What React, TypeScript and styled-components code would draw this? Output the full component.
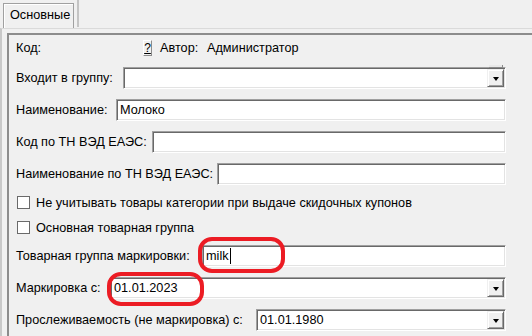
import React from 'react';
import styled, { createGlobalStyle } from 'styled-components';

const GlobalStyle = createGlobalStyle`
  html, body {
    margin: 0;
    padding: 0;
    background: #f0f0f0;
  }
  body {
    font-family: 'Liberation Sans', Arial, sans-serif;
    font-size: 12.7px;
    color: #000;
  }
`;

const Window = styled.div`
  position: relative;
  width: 532px;
  height: 336px;
  overflow: hidden;
  background: #f0f0f0;
  display: flex;
  flex-direction: column;
`;

const TabBar = styled.div`
  display: flex;
  align-items: flex-start;
  height: 28px;
  padding: 3px 0 0 3px;
  box-sizing: border-box;
`;

const Tab = styled.div`
  width: 71px;
  height: 25px;
  box-sizing: border-box;
  border: 1px solid #a0a0a0;
  border-bottom: none;
  box-shadow: inset 1px 1px #ffffff;
  padding: 4px 0 0 6px;
  white-space: nowrap;
`;

const TabEdge = styled.div`
  width: 2px;
  height: 27px;
  margin: -3px 0 0 3px;
  background: #c4c4c4;
`;

const Page = styled.div`
  flex: 1;
  display: flex;
  border-left: 2px solid #c8c8c8;
  border-top: 1px solid #dadada;
`;

const Frame = styled.div`
  flex: 1;
  margin: 4px 0 0 5px;
  border-top: 2px solid #8c8c8c;
  border-left: 2px solid #8c8c8c;
  padding: 4px 26px 0 7px;
`;

const Form = styled.div`
  display: flex;
  flex-direction: column;
`;

const Row = styled.div<{ h: number; mt: number }>`
  display: flex;
  align-items: center;
  height: ${(p) => p.h}px;
  margin-top: ${(p) => p.mt}px;
  white-space: nowrap;
`;

const Label = styled.div<{ w: number }>`
  width: ${(p) => p.w}px;
  flex: none;
`;

const HelpButton = styled.div`
  width: 9px;
  height: 16px;
  box-sizing: border-box;
  border-top: 1px solid #ffffff;
  border-left: 1px solid #ffffff;
  border-right: 1px solid #8c8c8c;
  border-bottom: 1px solid #8c8c8c;
  font-size: 12px;
  line-height: 14px;
  text-align: center;
  text-decoration: underline;
  margin-right: 8px;
`;

const Field = styled.div`
  position: relative;
  flex: 1;
  height: 22px;
  box-sizing: border-box;
  background: #ffffff;
  border-top: 1px solid #a0a0a0;
  border-left: 1px solid #a0a0a0;
  border-right: 1px solid #ffffff;
  border-bottom: 1px solid #ffffff;
  box-shadow: inset 1px 1px #696969, inset -1px -1px #e3e3e3;
  display: flex;
  align-items: center;
  padding-left: 3px;
`;

const Caret = styled.span`
  display: inline-block;
  width: 1px;
  height: 16px;
  background: #000;
  margin-left: 1px;
`;

const DropButton = styled.div<{ hat?: boolean }>`
  position: absolute;
  right: 1px;
  top: 1px;
  width: 17px;
  height: 18px;
  box-sizing: border-box;
  background: #f0f0f0;
  border-top: 1px solid #f0f0f0;
  border-left: 1px solid #f0f0f0;
  border-right: 1px solid #696969;
  border-bottom: 1px solid #696969;
  box-shadow: inset 1px 1px #ffffff, inset -1px -1px #a0a0a0;
  display: flex;
  align-items: center;
  justify-content: center;

  &::after {
    content: '';
    border-left: 3.5px solid transparent;
    border-right: 3.5px solid transparent;
    border-top: 4px solid #000;
    margin-top: 1px;
  }

  ${(p) =>
    p.hat &&
    `
    &::before {
      content: '';
      position: absolute;
      left: 1px;
      top: -5px;
      width: 13px;
      height: 2px;
      background: #e8e8e8;
      border-bottom: 1px solid #8a8a8a;
      border-right: 1px solid #8a8a8a;
    }
  `}
`;

const Check = styled.div`
  width: 13px;
  height: 13px;
  box-sizing: border-box;
  border: 1px solid #6a6a6a;
  background: #ffffff;
  margin: 0 6px 0 1px;
`;

const Mark = styled.div<{ x: number; y: number; w: number; h: number }>`
  position: absolute;
  left: ${(p) => p.x}px;
  top: ${(p) => p.y}px;
  width: ${(p) => p.w}px;
  height: ${(p) => p.h}px;
  box-sizing: border-box;
  border: 4px solid #ec1c24;
  border-radius: 14px;
  pointer-events: none;
`;

const App = () => {
  return (
    <Window>
      <GlobalStyle />
      <TabBar>
        <Tab>Основные</Tab>
        <TabEdge />
      </TabBar>
      <Page>
        <Frame>
          <Form>
            <Row h={18} mt={0}>
              <Label w={127}>Код:</Label>
              <HelpButton>?</HelpButton>
              <Label w={47}>Автор:</Label>
              <span>Администратор</span>
            </Row>
            <Row h={22} mt={10}>
              <Label w={107}>Входит в группу:</Label>
              <Field>
                <DropButton hat />
              </Field>
            </Row>
            <Row h={22} mt={10}>
              <Label w={100}>Наименование:</Label>
              <Field>Молоко</Field>
            </Row>
            <Row h={22} mt={10}>
              <Label w={136}>Код по ТН ВЭД ЕАЭС:</Label>
              <Field />
            </Row>
            <Row h={22} mt={10}>
              <Label w={201}>Наименование по ТН ВЭД ЕАЭС:</Label>
              <Field />
            </Row>
            <Row h={15} mt={10}>
              <Check />
              <span>Не учитывать товары категории при выдаче скидочных купонов</span>
            </Row>
            <Row h={15} mt={10}>
              <Check />
              <span>Основная товарная группа</span>
            </Row>
            <Row h={22} mt={10}>
              <Label w={186}>Товарная группа маркировки:</Label>
              <Field>
                milk
                <Caret />
              </Field>
            </Row>
            <Row h={22} mt={10}>
              <Label w={94}>Маркировка с:</Label>
              <Field>
                01.01.2023
                <DropButton />
              </Field>
            </Row>
            <Row h={22} mt={10}>
              <Label w={240}>Прослеживаемость (не маркировка) с:</Label>
              <Field>
                01.01.1980
                <DropButton />
              </Field>
            </Row>
          </Form>
        </Frame>
      </Page>
      <Mark x={198} y={237} w={87} h={36} />
      <Mark x={107} y={272} w={97} h={34} />
    </Window>
  );
};

export default App;
